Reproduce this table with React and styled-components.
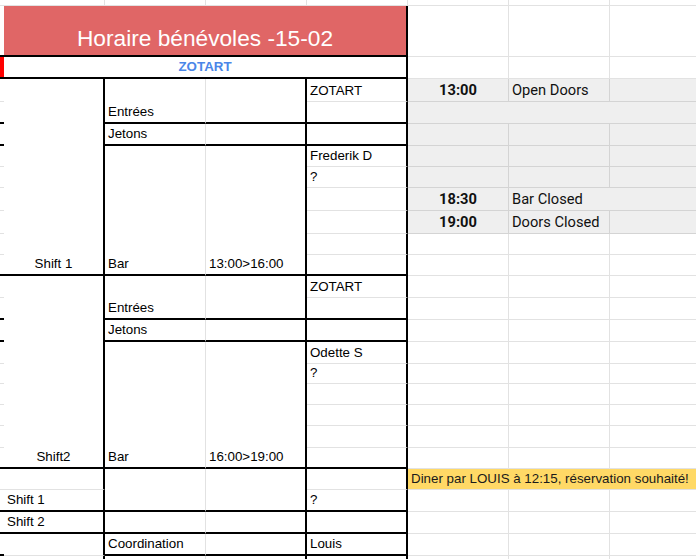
import React from 'react';
import styled, { createGlobalStyle } from 'styled-components';

const GlobalStyle = createGlobalStyle`
  html, body {
    margin: 0;
    padding: 0;
    background: #ffffff;
    overflow: hidden;
  }
  body {
    font-family: 'Liberation Sans', Arial, sans-serif;
  }
`;

// row heights measured on the sheet (top partial row first)
const ROWS = [6, 51, 22, 23, 22, 22, 21, 21, 23, 23, 21, 21, 22, 22, 22, 22, 20, 21, 21, 22, 21, 21, 22, 22, 22, 30];

const LINES = {
    grid: '1px solid #e2e2e2',
    shade: '1px solid #d4d4d4',
    thick: '2px solid #000000',
};

const Sheet = styled.div`
    display: grid;
    grid-template-columns: 4px repeat(7, 101px);
    grid-template-rows: ${ROWS.map(h => h + 'px').join(' ')};
    width: 696px;
    height: 559px;
    overflow: hidden;
    background: #ffffff;
`;

const Cell = styled.div`
    grid-row: ${p => p.$r + 1} / span ${p => p.$rs || 1};
    grid-column: ${p => p.$c} / span ${p => p.$cs || 1};
    box-sizing: border-box;
    display: flex;
    align-items: flex-end;
    justify-content: ${p => (p.$center ? 'center' : 'flex-start')};
    padding: 0 3px 2px 3px;
    border-right: ${p => LINES[p.$br || 'grid']};
    border-bottom: ${p => LINES[p.$bb || 'grid']};
    background: ${p => p.$bg || '#ffffff'};
    font-size: 13.33px;
    line-height: 16px;
    color: #000000;
    white-space: nowrap;
    min-width: 0;
`;

const TitleCell = styled(Cell)`
    background: #e06666;
    color: #ffffff;
    font-size: 22.7px;
    line-height: 28px;
    padding-bottom: 3px;
`;

const BannerCell = styled(Cell)`
    color: #4a86e8;
    font-weight: 700;
`;

const AgendaCell = styled(Cell)`
    background: #efefef;
    border-right: ${p => LINES[p.$br || 'shade']};
    border-bottom: ${LINES.shade};
    padding-bottom: 3px;
    font-family: Roboto, 'Liberation Sans', sans-serif;
    font-size: 14.67px;
    font-weight: ${p => (p.$bold ? 700 : 400)};
    color: #111111;
`;

const NoteCell = styled(Cell)`
    background: #ffd966;
    color: #1a1a1a;
`;

// narrow strip of the column left of the sheet
const EDGE = ['grid', 'thick', 'thick', 'grid', 'thick', 'thick', 'grid', 'grid', 'grid', 'grid', 'grid', 'thick',
    'grid', 'thick', 'thick', 'grid', 'grid', 'grid', 'grid', 'grid', 'thick', 'grid', 'thick', 'thick', 'thick', 'grid'];

function shiftBlock(start, label, hours, who) {
    return [
        { c: 2, r: start, rs: 9, text: label, center: true, br: 'thick', bb: 'thick' },
        { c: 3, r: start, rs: 2, text: 'Entrées', bb: 'thick' },
        { c: 3, r: start + 2, text: 'Jetons', bb: 'thick' },
        { c: 3, r: start + 3, rs: 6, text: 'Bar', bb: 'thick' },
        { c: 4, r: start, rs: 2, br: 'thick', bb: 'thick' },
        { c: 4, r: start + 2, br: 'thick', bb: 'thick' },
        { c: 4, r: start + 3, rs: 6, text: hours, br: 'thick', bb: 'thick' },
        { c: 5, r: start, text: 'ZOTART', br: 'thick' },
        { c: 5, r: start + 1, br: 'thick', bb: 'thick' },
        { c: 5, r: start + 2, br: 'thick', bb: 'thick' },
        { c: 5, r: start + 3, text: who, br: 'thick' },
        { c: 5, r: start + 4, text: '?', br: 'thick' },
        { c: 5, r: start + 5, br: 'thick' },
        { c: 5, r: start + 6, br: 'thick' },
        { c: 5, r: start + 7, br: 'thick' },
        { c: 5, r: start + 8, br: 'thick', bb: 'thick' },
    ];
}

const CELLS = [
    ...[2, 3, 4, 5, 6, 7, 8].map(c => ({ c, r: 0 })),
    ...shiftBlock(3, 'Shift 1', '13:00>16:00', 'Frederik D'),
    ...shiftBlock(12, 'Shift2', '16:00>19:00', 'Odette S'),
    { c: 2, r: 21, br: 'thick' },
    { c: 2, r: 22, text: 'Shift 1', br: 'thick', bb: 'thick' },
    { c: 2, r: 23, text: 'Shift 2', br: 'thick', bb: 'thick' },
    { c: 2, r: 24, br: 'thick' },
    { c: 2, r: 25, br: 'thick' },
    { c: 3, r: 21, rs: 2, bb: 'thick' },
    { c: 3, r: 23, bb: 'thick' },
    { c: 3, r: 24, text: 'Coordination', bb: 'thick' },
    { c: 3, r: 25 },
    { c: 4, r: 21, rs: 2, br: 'thick', bb: 'thick' },
    { c: 4, r: 23, br: 'thick', bb: 'thick' },
    { c: 4, r: 24, br: 'thick', bb: 'thick' },
    { c: 4, r: 25, br: 'thick' },
    { c: 5, r: 21, br: 'thick' },
    { c: 5, r: 22, text: '?', br: 'thick', bb: 'thick' },
    { c: 5, r: 23, br: 'thick', bb: 'thick' },
    { c: 5, r: 24, text: 'Louis', br: 'thick', bb: 'thick' },
    { c: 5, r: 25, br: 'thick' },
];

// blank cells right of the schedule
const BLANKS = [];
[1, 2, 10, 11, 12, 13, 14, 15, 16, 17, 18, 19, 20, 22, 23, 24, 25].forEach(r => {
    [6, 7, 8].forEach(c => BLANKS.push({ c, r }));
});

const AGENDA = [
    { r: 3, c: 6, text: '13:00', bold: true, center: true },
    { r: 3, c: 7, text: 'Open Doors' },
    { r: 3, c: 8 },
    { r: 4, c: 6, cs: 3 },
    ...[5, 6, 7].flatMap(r => [6, 7, 8].map(c => ({ r, c }))),
    { r: 8, c: 6, text: '18:30', bold: true, center: true },
    { r: 8, c: 7, cs: 2, text: 'Bar Closed' },
    { r: 9, c: 6, text: '19:00', bold: true, center: true },
    { r: 9, c: 7, text: 'Doors Closed' },
    { r: 9, c: 8 },
];

export default function App() {
    return (
        <>
            <GlobalStyle />
            <Sheet>
                {EDGE.map((kind, r) => (
                    <Cell key={'a' + r} $c={1} $r={r} $br={r === 0 ? 'grid' : 'thick'} $bb={kind}
                        $bg={r === 2 ? '#ff0000' : undefined} />
                ))}
                <TitleCell $c={2} $r={1} $cs={4} $center $br="thick" $bb="thick">Horaire bénévoles -15-02</TitleCell>
                <BannerCell $c={2} $r={2} $cs={4} $center $br="thick" $bb="thick">ZOTART</BannerCell>
                {CELLS.map((cell, i) => (
                    <Cell key={'c' + i} $c={cell.c} $r={cell.r} $rs={cell.rs} $cs={cell.cs}
                        $center={cell.center} $br={cell.br} $bb={cell.bb}>
                        {cell.text}
                    </Cell>
                ))}
                {BLANKS.map((cell, i) => (
                    <Cell key={'b' + i} $c={cell.c} $r={cell.r} />
                ))}
                {AGENDA.map((cell, i) => (
                    <AgendaCell key={'g' + i} $c={cell.c} $r={cell.r} $cs={cell.cs}
                        $bold={cell.bold} $center={cell.center}>
                        {cell.text}
                    </AgendaCell>
                ))}
                <NoteCell $c={6} $r={21} $cs={3}>Diner par LOUIS à 12:15, réservation souhaité!</NoteCell>
            </Sheet>
        </>
    );
}
